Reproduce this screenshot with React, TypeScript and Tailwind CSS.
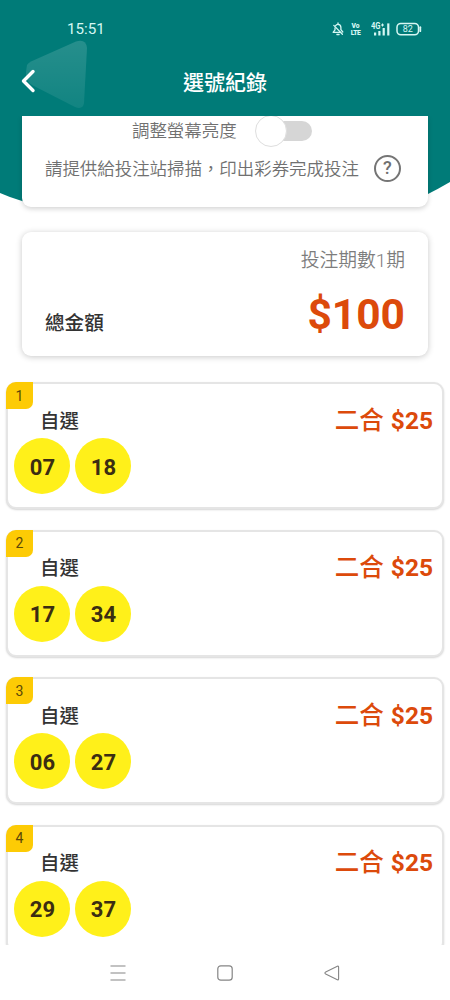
import React from "react";

type Ticket = {
  id: number;
  numbers: string[];
};

const tickets: Ticket[] = [
  { id: 1, numbers: ["07", "18"] },
  { id: 2, numbers: ["17", "34"] },
  { id: 3, numbers: ["06", "27"] },
  { id: 4, numbers: ["29", "37"] },
];

const StatusBar = () => {
  return (
    <div className="flex h-[58px] items-center justify-between pl-[67px] pr-[28px] text-[#d5f7f3]">
      <span className="text-[15.2px] leading-4">15:51</span>
      <div className="flex items-center">
        <svg
          width="12"
          height="14"
          viewBox="0 0 12 14"
          fill="none"
          stroke="currentColor"
          strokeWidth="1.3"
          strokeLinecap="round"
          strokeLinejoin="round"
        >
          <path d="M3.6 3.8C4 2.8 4.8 2.3 6 2.3c1.9 0 2.9 1.4 2.9 3.2v2.200l1.900 2.300M8.600 10.300H1.100L3 7.800V6" />
          <path d="M6 1v1M4.900 12.500h2.200M1.800 3.400l8.600 8.800" />
        </svg>
        <div className="ml-[7px] mr-px flex w-[9px] scale-x-90 flex-col items-center text-[7.5px] font-black leading-[7px]">
          <span>Vo</span>
          <span className="tracking-[-0.5px]">LTE</span>
        </div>
        <svg width="20" height="14" viewBox="0 0 20 14" className="ml-[10px]" fill="currentColor">
          <text
            x="0"
            y="7.2"
            fontSize="8.5"
            fontWeight="700"
            fontFamily="Roboto, sans-serif"
            textLength="9.5"
            lengthAdjust="spacingAndGlyphs"
          >
            4G
          </text>
          <path d="M10 2.600h3v1h-3zM11 1.600h1v3h-1z" />
          <rect x="3" y="10.5" width="2.2" height="3" />
          <rect x="7.3" y="9" width="2.2" height="4.5" />
          <rect x="11.6" y="6" width="2.2" height="7.5" />
          <rect x="16.2" y="1.4" width="2.2" height="12.1" />
        </svg>
        <svg width="26" height="14" viewBox="0 0 26 14" className="ml-[5px]" fill="none">
          <rect x="1" y="1.4" width="21.5" height="11.4" rx="3.8" stroke="currentColor" strokeWidth="1.5" />
          <path d="M24.300 5.200v4" stroke="currentColor" strokeWidth="1.8" strokeLinecap="round" />
          <text
            x="11.8"
            y="10.3"
            fontSize="9"
            textAnchor="middle"
            fill="currentColor"
            fontFamily="Roboto, sans-serif"
          >
            82
          </text>
        </svg>
      </div>
    </div>
  );
};

const Header = () => {
  return (
    <header className="relative h-[116px] shrink-0">
      <svg
        width="76"
        height="76"
        viewBox="0 0 76 76"
        className="absolute left-[20px] top-[36px]"
        fill="none"
      >
        <defs>
          <linearGradient id="fade" x1="0" y1="0" x2="0" y2="1">
            <stop offset="0" stopColor="#fff" stopOpacity="0.15" />
            <stop offset="1" stopColor="#fff" stopOpacity="0.07" />
          </linearGradient>
        </defs>
        <path
          d="M7 29Q8 27 11 25.5L56 5.5Q66 2.5 67 12L64 67Q63 74 55 71L12 49Q5 45 6 36Z"
          fill="url(#fade)"
        />
      </svg>
      <div className="relative">
        <StatusBar />
        <div className="flex h-[46px] items-center">
          <button className="ml-[20px] w-[18px]">
            <svg width="18" height="26" viewBox="0 0 18 26" fill="none">
              <path
                d="M13 3.5 3.5 13l9.5 9.5"
                stroke="#fff"
                strokeWidth="3.4"
                strokeLinecap="round"
                strokeLinejoin="round"
              />
            </svg>
          </button>
          <h1 className="mr-[38px] flex-1 pt-[4px] text-center text-[21px] font-medium leading-[30px] text-white">
            選號紀錄
          </h1>
        </div>
      </div>
    </header>
  );
};

const ScanCard = () => {
  return (
    <section className="mx-[22px] h-[91px] rounded-b-[9px] bg-white text-[17.45px] font-[350] text-[#707070] shadow-[0_2px_5px_rgba(0,0,0,0.17)]">
      <div className="flex h-[30px] items-center pl-[110px]">
        <span className="leading-[30px]">調整螢幕亮度</span>
        <div className="ml-[24px] flex h-[20px] w-[51px] items-center rounded-full bg-[#d6d6d6]">
          <div className="-ml-[6px] size-[32px] shrink-0 rounded-full border border-[#dedede] bg-white" />
        </div>
      </div>
      <div className="flex h-[44px] items-center pl-[23px]">
        <span className="whitespace-nowrap pt-[2px] leading-[42px]">請提供給投注站掃描，印出彩券完成投注</span>
        <span className="ml-[15px] flex size-[27px] items-center justify-center rounded-full border-[2.5px] border-[#757575] text-[18px] font-medium leading-none">
          ?
        </span>
      </div>
    </section>
  );
};

const TotalCard = () => {
  return (
    <section className="mx-[22px] mt-[25px] h-[124px] rounded-[9px] bg-white px-[23px] pt-[16px] shadow-[0_1px_6px_rgba(0,0,0,0.22)]">
      <p className="text-right text-[18.8px] font-[350] leading-[26px] text-[#7d7d7d]">投注期數1期</p>
      <div className="flex items-center justify-between pt-[8px]">
        <span className="pt-[17px] text-[19.6px] font-medium leading-[50px] text-[#333]">總金額</span>
        <span className="pb-[2px] text-[42.5px] font-bold leading-[50px] text-[#dc4a0b]">$100</span>
      </div>
    </section>
  );
};

const TicketCard = ({ id, numbers }: Ticket) => {
  return (
    <section className="relative h-[127px] shrink-0 rounded-[10px] border-2 border-[#e5e5e5] bg-white shadow-[0_1px_2px_rgba(0,0,0,0.17)]">
      <span className="absolute -left-[2px] -top-[2px] flex size-[27px] items-center justify-center rounded-br-[7px] rounded-tl-[10px] bg-[#fdcb05] pt-px text-[14px] text-[#5b4708]">
        {id}
      </span>
      <div className="flex h-[54px] items-center justify-between pl-[32px] pr-[9px] pt-[18px]">
        <span className="pt-[3px] text-[19.4px] font-medium leading-[36px] text-[#333]">自選</span>
        <span className="pt-px text-[24.5px] font-bold leading-[36px] text-[#dc4a0b]">
          <span className="mr-px font-medium">二合</span> $25
        </span>
      </div>
      <div className="flex gap-[5px] pl-[6.4px]">
        {numbers.map((n) => (
          <span
            key={n}
            className="flex size-[56px] items-center justify-center rounded-full bg-[#fff01a] pt-[2px] text-[22px] font-bold text-[#3b2d12]"
          >
            {n}
          </span>
        ))}
      </div>
    </section>
  );
};

const NavBar = () => {
  return (
    <nav className="relative flex h-[55px] shrink-0 items-center justify-center gap-[91px] bg-white text-[#858585]">
      <svg width="16" height="16" viewBox="0 0 16 16" stroke="currentColor" strokeWidth="1.2">
        <path d="M0.5 1h15M0.5 8h15M0.5 15h15" />
      </svg>
      <svg width="16" height="16" viewBox="0 0 16 16" fill="none" stroke="currentColor" strokeWidth="1.2">
        <rect x="0.8" y="0.8" width="14.4" height="14.4" rx="3" />
      </svg>
      <svg width="16" height="16" viewBox="0 0 16 16" fill="none" stroke="currentColor" strokeWidth="1.1">
        <path d="M1.7 7 13.3 1.2q1.3-.4 1.3 1v11.600q0 1.4-1.3 1L1.7 9q-1.6-1 0-2Z" />
      </svg>
    </nav>
  );
};

const App = () => {
  return (
    <div className="relative flex h-[1000px] w-[450px] flex-col overflow-hidden bg-white font-['Roboto','Noto_Sans_CJK_TC',sans-serif]">
      <svg width="450" height="260" viewBox="0 0 450 260" className="absolute left-0 top-0">
        <path d="M0 0H450V182Q438 189 428 194L400 203H30L22 201Q10 197.500 0 193Z" fill="#007b78" />
      </svg>
      <Header />
      <main className="relative h-[829px] shrink-0 overflow-hidden">
        <ScanCard />
        <TotalCard />
        <div className="mx-[6px] mt-[26px] flex flex-col gap-[20.5px]">
          {tickets.map((ticket) => (
            <TicketCard key={ticket.id} {...ticket} />
          ))}
        </div>
      </main>
      <NavBar />
    </div>
  );
};

export default App;
